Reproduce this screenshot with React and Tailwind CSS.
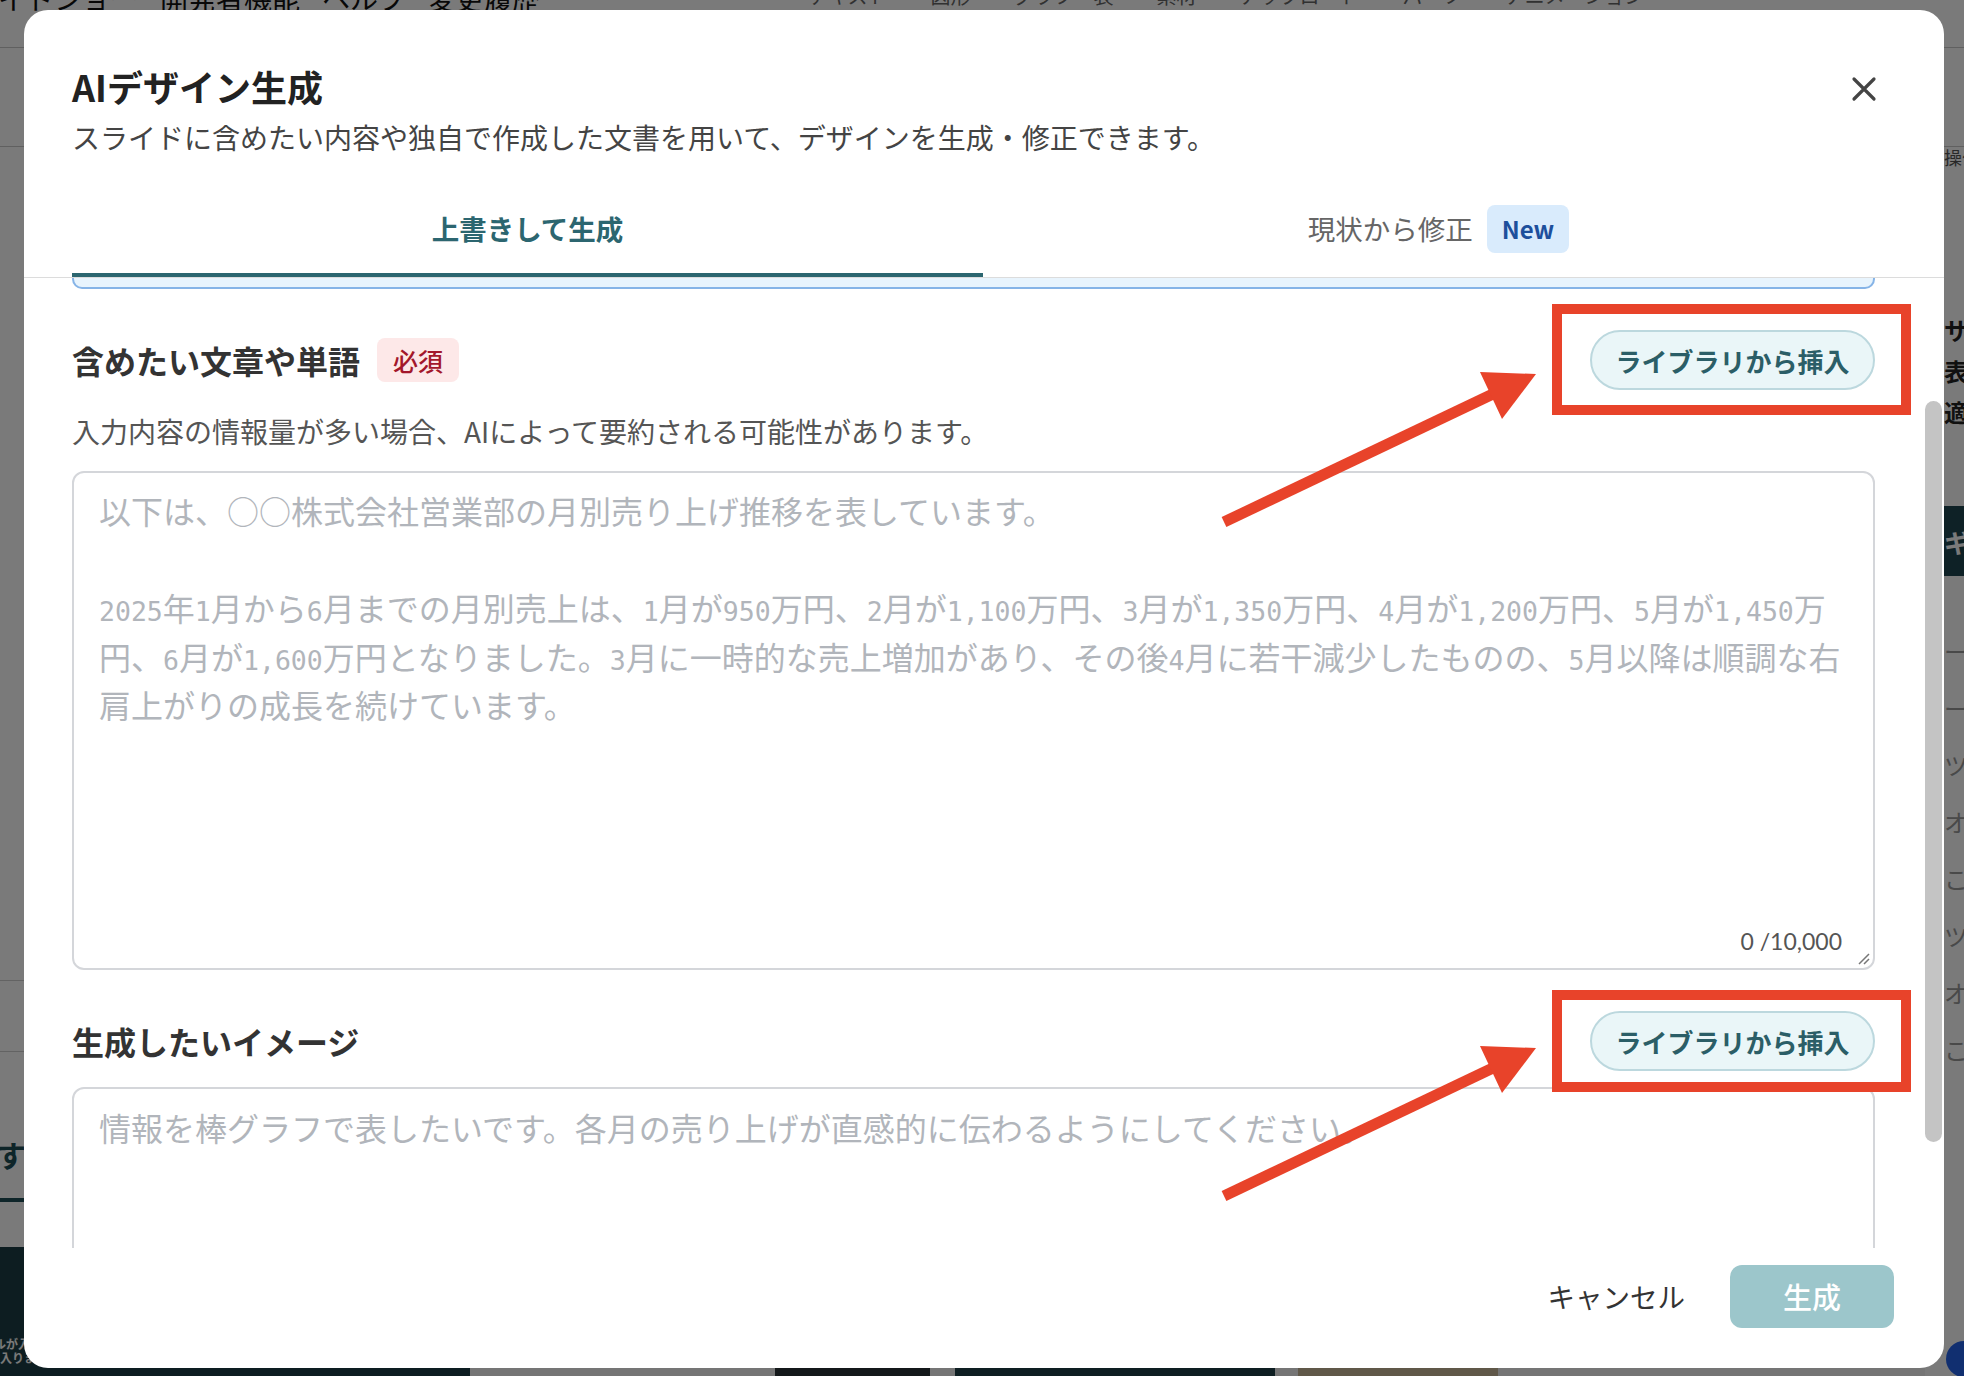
import React from 'react'

const SAMPLE_LINES = [
  '以下は、○○株式会社営業部の月別売り上げ推移を表しています。',
  '',
  '2025年1月から6月までの月別売上は、1月が950万円、2月が1,100万円、3月が1,350万円、4月が1,200万円、5月が1,450万',
  '円、6月が1,600万円となりました。3月に一時的な売上増加があり、その後4月に若干減少したものの、5月以降は順調な右',
  '肩上がりの成長を続けています。',
]

const PANEL_ITEMS = ['ーダー', 'ーム', 'ツール', 'オブジェクト', 'こちら', 'ツール', 'オブジェクト', 'こちら']

// half-width digits in the sample text use a mono face
function MonoDigits({ text }) {
  return text.split(/([0-9,]+)/).map((part, i) =>
    /^[0-9,]+$/.test(part) ? (
      <span key={i} className="font-['DejaVu_Sans_Mono',monospace] text-[26.5px] leading-[0px]">
        {part}
      </span>
    ) : (
      <React.Fragment key={i}>{part}</React.Fragment>
    )
  )
}

function EditorBackdrop() {
  return (
    <div className="flex h-full flex-col">
      {/* menu bar */}
      <div className="flex h-[48px] shrink-0 items-start overflow-hidden whitespace-nowrap border-b border-[#c8c8c8]">
        <div className="-ml-[30px] -mt-[22px] flex gap-[22px] text-[28px] leading-[40px] text-[#111]">
          <span>ライドショー</span>
          <span>開発者機能</span>
          <span>ヘルプ</span>
          <span>変更履歴</span>
        </div>
        <div className="ml-[268px] -mt-[19px] flex gap-[43px] text-[20px] leading-[30px] text-[#666]">
          <span>テキスト</span>
          <span>図形</span>
          <span>グラフ・表</span>
          <span>素材</span>
          <span>アップロード</span>
          <span>パーツ</span>
          <span>アニメーション</span>
        </div>
      </div>
      <div className="h-[99px] shrink-0 border-b border-[#c8c8c8]" />

      <div className="flex min-h-0 flex-1">
        <aside className="flex w-[470px] shrink-0 flex-col">
          <div className="h-[834px] shrink-0 border-b border-[#cfcfcf]" />
          <div className="h-[71px] shrink-0 border-b border-[#cfcfcf]" />
          <div className="flex h-[150px] shrink-0 items-end border-b-[4px] border-[#1f4e57] pb-[22px]">
            <span className="-ml-[4px] text-[30px] font-bold leading-[44px] text-[#1f4e57]">すべて</span>
          </div>
          <div className="h-[45px] shrink-0" />
          <div className="flex-1 bg-[#1c3d45] pt-[90px] text-[12px] font-bold leading-[14px] text-white">
            <p className="-ml-[6px]">ルが入ります</p>
            <p>入ります</p>
          </div>
        </aside>

        <main className="flex w-[1455px] shrink-0 flex-col justify-end bg-[#f4f4f4]">
          <div className="flex h-[40px] items-stretch">
            <div className="ml-[305px] w-[155px] bg-[#2a3338]" />
            <div className="ml-[25px] w-[320px] bg-[#1f3f47]" />
            <div className="ml-[23px] w-[200px] bg-[#c9b99a]" />
          </div>
        </main>

        <aside className="flex w-[320px] shrink-0 flex-col whitespace-nowrap pl-[19px]">
          <p className="-mt-[2px] text-[18px] leading-[24px] text-[#555]">操作</p>
          <div className="mt-[140px] text-[24px] font-bold leading-[41px] text-[#222]">
            <p>サイズ</p>
            <p>表示</p>
            <p>適用</p>
          </div>
          <div className="mt-[74px] flex h-[70px] items-center bg-[#1f4650] text-[26px] font-bold text-white">
            ギャラリー
          </div>
          <ul className="mt-[46px] flex flex-col text-[24px] leading-[57px] text-[#999]">
            {PANEL_ITEMS.map((item, i) => (
              <li key={i}>{item}</li>
            ))}
          </ul>
        </aside>
      </div>

      {/* floating help button */}
      <div className="absolute left-[1946px] top-[1341px] h-[36px] w-[36px] rounded-full bg-[#2563eb]" />
    </div>
  )
}

function FieldHeader({ label, required }) {
  return (
    <div className="flex h-[60px] items-center justify-between">
      <div className="flex items-center gap-[17px]">
        <span className="text-[32px] font-bold leading-[44px] text-[#333]">{label}</span>
        {required && (
          <span className="rounded-[8px] bg-[#fde8e8] px-[16px] text-[25px] font-medium leading-[44px] text-[#a3172b]">
            必須
          </span>
        )}
      </div>
      <button className="h-[60px] w-[285px] rounded-full border-2 border-[#bcd8de] bg-[#eaf6f8] text-[26px] font-bold text-[#2b5e67]">
        ライブラリから挿入
      </button>
    </div>
  )
}

function GenerateDialog() {
  return (
    <div className="absolute left-[24px] top-[10px] flex h-[1358px] w-[1920px] flex-col overflow-hidden rounded-[24px] bg-white">
      {/* header + tabs */}
      <div className="shrink-0 border-b border-[#dcdcdc] pl-[48px] pr-[50px] pt-[52px]">
        <div className="flex items-start justify-between">
          <h2 className="text-[36px] font-bold leading-[48px] text-[#222]">AIデザイン生成</h2>
          <button className="relative top-[3px] mr-[6px] flex h-[48px] w-[48px] items-center justify-center text-[#444]">
            <svg width="26" height="26" viewBox="0 0 26 26" fill="none" stroke="currentColor" strokeWidth="3.2" strokeLinecap="round">
              <path d="M3 3l20 20M23 3L3 23" />
            </svg>
          </button>
        </div>
        <p className="mt-[7px] text-[28px] leading-[40px] text-[#444]">
          スライドに含めたい内容や独自で作成した文書を用いて、デザインを生成・修正できます。
        </p>
        <div className="mt-[28px] flex">
          <button className="flex h-[92px] flex-1 items-center justify-center border-b-[4px] border-[#2c6670] text-[27.5px] font-bold text-[#2c6670]">
            上書きして生成
          </button>
          <button className="flex h-[92px] flex-1 items-center justify-center gap-[14px] border-b-[4px] border-transparent text-[27.5px] text-[#666]">
            現状から修正
            <span className="rounded-[8px] bg-[#d9ebfc] px-[15px] text-[24px] font-bold leading-[48px] text-[#1d4f9c]">New</span>
          </button>
        </div>
      </div>

      {/* form body */}
      <div className="relative h-[970px] shrink-0 overflow-hidden">
        <div className="pl-[48px] pr-[69px]">
          <div className="h-[11px] rounded-b-[10px] border-x-2 border-b-2 border-[#86b4e7] bg-[#e8f4fd]" />

          <div className="mt-[41px]">
            <FieldHeader label="含めたい文章や単語" required />
          </div>
          <p className="mt-[21px] text-[28px] leading-[40px] text-[#555]">
            入力内容の情報量が多い場合、AIによって要約される可能性があります。
          </p>
          <div className="relative mt-[20px] h-[499px] rounded-[12px] border-2 border-[#d4d6da] pl-[25px] pt-[13px] text-[32px] leading-[48.5px] text-[#b1b5bb]">
            {SAMPLE_LINES.map((line, i) =>
              line ? (
                <div key={i} className="h-[48.5px] whitespace-nowrap">
                  <MonoDigits text={line} />
                </div>
              ) : (
                <div key={i} className="h-[48.5px]" />
              )
            )}
            <span className="absolute bottom-[11px] right-[31px] font-['Lato',sans-serif] text-[23px] leading-[32px] text-[#555]">
              0 /10,000
            </span>
            <svg className="absolute bottom-[3px] right-[3px]" width="14" height="14" viewBox="0 0 14 14" stroke="#777" strokeWidth="1.5">
              <path d="M13 3L3 13M13 8L8 13" />
            </svg>
          </div>

          <div className="mt-[41px]">
            <FieldHeader label="生成したいイメージ" />
          </div>
          <div className="mt-[16px] h-[300px] rounded-[12px] border-2 border-[#d4d6da] pl-[25px] pt-[14px] text-[32px] leading-[48.5px] text-[#b1b5bb]">
            情報を棒グラフで表したいです。各月の売り上げが直感的に伝わるようにしてください。
          </div>
        </div>

        {/* scrollbar thumb */}
        <div className="absolute right-[2px] top-[123px] h-[741px] w-[17px] rounded-full bg-[#c4c4c4]" />
      </div>

      {/* footer */}
      <div className="flex h-[120px] shrink-0 items-start justify-end gap-[45px] pr-[50px] pt-[17px]">
        <button className="flex h-[63px] items-center text-[27.5px] text-[#333]">キャンセル</button>
        <button className="h-[63px] w-[164px] rounded-[12px] bg-[#9cc6cb] text-[29px] font-medium text-white">生成</button>
      </div>
    </div>
  )
}

function Callouts() {
  return (
    <svg className="pointer-events-none absolute inset-0" width="1964" height="1376" viewBox="0 0 1964 1376">
      {[0, 674].map((dy) => (
        <g key={dy} transform={`translate(0 ${dy})`} fill="#e8432a" stroke="#e8432a">
          <line x1="1224" y1="522" x2="1495" y2="393" strokeWidth="11" />
          <polygon points="1480,372 1536,374 1502,419" stroke="none" />
        </g>
      ))}
      <rect x="1557" y="309" width="349" height="101" fill="none" stroke="#e8432a" strokeWidth="10" />
      <rect x="1557" y="995" width="349" height="92" fill="none" stroke="#e8432a" strokeWidth="10" />
    </svg>
  )
}

export default function App() {
  return (
    <div className="relative h-[1376px] w-[1964px] overflow-hidden bg-white font-['Noto_Sans_CJK_JP','Noto_Sans',sans-serif]">
      <EditorBackdrop />
      <div className="absolute inset-0 bg-black/[0.52]" />
      <GenerateDialog />
      <Callouts />
    </div>
  )
}
